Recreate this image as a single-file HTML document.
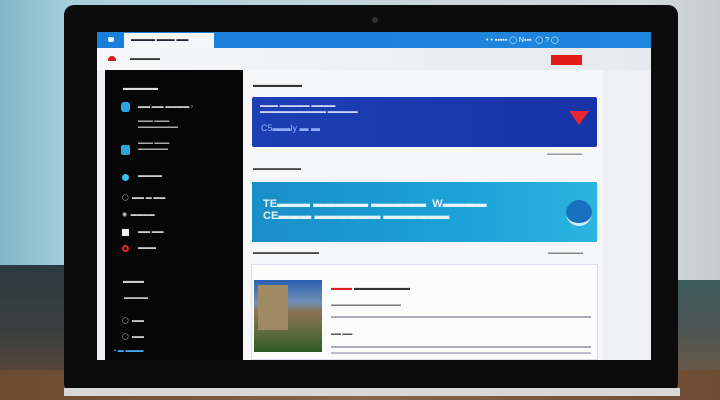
<!DOCTYPE html><html><head><style>
*{margin:0;padding:0;box-sizing:border-box}
body{width:720px;height:400px;overflow:hidden;position:relative;font-family:"Liberation Sans",sans-serif;background:linear-gradient(90deg,#7fb6c8 0%,#a9cfdc 10%,#c9d6db 60%,#d4dadb 90%,#c6cccc 100%)}
.a{position:absolute}
.t{position:absolute;font-size:7px;white-space:nowrap}
</style></head><body>
<div class="a" style="left:0;top:265px;width:80px;height:135px;background:linear-gradient(#2b3a40,#3b3f3e 50%,#6a4a32)"></div>
<div class="a" style="left:660px;top:280px;width:60px;height:120px;background:linear-gradient(#3b5a5c,#4c5654 40%,#7a5a3e)"></div>
<div class="a" style="left:0;top:370px;width:720px;height:30px;background:linear-gradient(90deg,#6b4a30,#8a6446 50%,#6e4c33)"></div>
<div class="a" style="left:64px;top:5px;width:614px;height:388px;background:#0c0c0d;border-radius:10px"></div>
<div class="a" style="left:64px;top:388px;width:616px;height:8px;background:#d8d8d8"></div>
<div class="a" style="left:372px;top:17px;width:6px;height:6px;border-radius:50%;background:#333"></div>
<div class="a" style="left:97px;top:32px;width:554px;height:328px;background:#eef0f3"></div>
<div class="a" style="left:97px;top:32px;width:554px;height:16px;background:linear-gradient(90deg,#1a7fd8,#1f86de)"></div>
<div class="a" style="left:124px;top:33px;width:90px;height:15px;background:#f4f6f8"></div>
<div class="t" style="left:131px;top:37px;color:#223;font-weight:bold;font-size:6px">▬▬▬▬ ▬▬▬ ▬▬</div>
<div class="a" style="left:108px;top:37px;width:6px;height:5px;background:#dff;border-radius:2px"></div>
<div class="t" style="left:486px;top:36px;color:#fff;font-size:7px">• • ▪▪▪▪▪ ◯ N▪▪▪ &nbsp;◯ ? ◯</div>
<div class="a" style="left:97px;top:48px;width:554px;height:22px;background:linear-gradient(90deg,#f6f7f9,#e6e9ed)"></div>
<div class="a" style="left:108px;top:56px;width:8px;height:5px;background:#d02020;border-radius:4px 4px 0 0"></div>
<div class="t" style="left:130px;top:56px;font-size:6px;color:#333">▬▬▬▬▬</div>
<div class="a" style="left:551px;top:55px;width:31px;height:10px;background:#e21a1a"></div>
<div class="a" style="left:105px;top:70px;width:138px;height:290px;background:#060606"></div>
<div class="a" style="left:243px;top:70px;width:360px;height:290px;background:#f6f7f8"></div>
<div class="t" style="left:123px;top:85px;color:#ddd;font-weight:bold">▬▬▬▬▬</div>
<div class="a" style="left:121px;top:145px;width:9px;height:10px;background:#2aa6e0;border-radius:2px"></div>
<div class="a" style="left:121px;top:102px;width:9px;height:10px;background:#2aa6e0;border-radius:3px"></div>
<div class="t" style="left:138px;top:104px;color:#ccc;font-size:6px">▬▬ ▬▬ ▬▬▬▬ ›</div>
<div class="t" style="left:138px;top:118px;color:#aaa;font-size:5px">▬▬▬ ▬▬▬<br>▬▬▬▬▬▬▬▬</div>
<div class="t" style="left:138px;top:140px;color:#aaa;font-size:5px">▬▬▬ ▬▬▬<br>▬▬▬▬▬▬</div>
<div class="a" style="left:122px;top:174px;width:7px;height:7px;border-radius:50%;background:#3ac0f0"></div>
<div class="t" style="left:138px;top:173px;color:#ccc;font-size:6px">▬▬▬▬</div>
<div class="t" style="left:122px;top:194px;color:#ccc;font-size:6px">◯ &nbsp;▬▬ ▬ ▬▬</div>
<div class="t" style="left:122px;top:211px;color:#ccc;font-size:6px">◉ &nbsp;▬▬▬▬</div>
<div class="a" style="left:122px;top:318px;width:0;height:0"></div>
<div class="a" style="left:122px;top:229px;width:7px;height:7px;background:#eee"></div>
<div class="t" style="left:138px;top:229px;color:#ccc;font-size:6px">▬▬ ▬▬</div>
<div class="a" style="left:122px;top:245px;width:7px;height:7px;border-radius:50%;border:2px solid #e22"></div>
<div class="t" style="left:138px;top:245px;color:#ccc;font-size:6px">▬▬▬</div>
<div class="t" style="left:123px;top:278px;color:#ccc;font-size:7px">▬▬▬</div>
<div class="t" style="left:124px;top:295px;color:#bbb;font-size:6px">▬▬▬▬</div>
<div class="t" style="left:122px;top:317px;color:#ccc;font-size:6px">◯ &nbsp;▬▬</div>
<div class="t" style="left:122px;top:333px;color:#ccc;font-size:6px">◯ &nbsp;▬▬</div>
<div class="t" style="left:114px;top:348px;color:#4af;font-size:6px">▪ ▬ ▬▬▬</div>
<div class="t" style="left:252px;top:114px;color:#333"></div>
<div class="t" style="left:253px;top:82px;color:#333;font-size:7px;font-weight:bold">▬▬▬▬▬▬▬</div>
<div class="a" style="left:587px;top:116px;width:5px;height:3px;background:#2255bb;top:116px"></div>
<div class="a" style="left:252px;top:97px;width:345px;height:50px;background:linear-gradient(90deg,#1d3fb4,#1733a8);border-radius:2px"></div>
<div class="t" style="left:260px;top:103px;color:#cfd8ff;font-size:6px">▬▬▬ ▬▬▬▬▬ ▬▬▬▬<br>▬▬▬▬▬▬▬▬▬▬▬ ▬▬▬▬▬</div>
<div class="t" style="left:261px;top:123px;color:#8fb0ff;font-size:9px">C5▬▬ly ▬ ▬</div>
<div class="a" style="left:569px;top:111px;width:0;height:0;border-left:10px solid transparent;border-right:10px solid transparent;border-top:14px solid #e82530"></div>
<div class="t" style="left:547px;top:151px;color:#999;font-size:5px">▬▬▬▬▬▬▬</div>
<div class="t" style="left:253px;top:166px;color:#444;font-size:6px;font-weight:bold">▬▬▬▬▬▬▬▬</div>
<div class="a" style="left:252px;top:182px;width:345px;height:60px;background:linear-gradient(90deg,#1a8ec7,#1ba2d6 60%,#2ab4e0)"></div>
<div class="t" style="left:263px;top:198px;color:#e4f4ff;font-size:11px;font-weight:bold;line-height:12px">TE▬▬▬ ▬▬▬▬▬ ▬▬▬▬▬ &nbsp;W▬▬▬▬<br>CE▬▬▬ ▬▬▬▬▬▬ ▬▬▬▬▬▬</div>
<div class="a" style="left:566px;top:200px;width:26px;height:26px;border-radius:50%;background:#1a70c0;border-bottom:3px solid #cfeefb"></div>
<div class="t" style="left:253px;top:347px"></div>
<div class="t" style="left:253px;top:250px;color:#444;font-size:6px">▬▬▬▬▬▬▬▬▬▬▬</div>
<div class="t" style="left:548px;top:250px;color:#888;font-size:5px">▬▬▬▬▬▬▬</div>
<div class="a" style="left:251px;top:264px;width:347px;height:96px;background:#fbfbfc;border:1px solid #dde"></div>
<div class="a" style="left:254px;top:280px;width:68px;height:72px;background:linear-gradient(180deg,#2a5fb0 0%,#6f8fb8 30%,#8a7452 45%,#5a6a3a 75%,#2e5a20 100%)"></div>
<div class="a" style="left:258px;top:285px;width:30px;height:45px;background:#a08a64"></div>
<div class="t" style="left:331px;top:394px"></div>
<div class="t" style="left:331px;top:394px"></div>
<div class="t" style="left:331px;top:393px"></div>
<div class="t" style="left:331px;top:394px"></div>
<div class="t" style="left:331px;top:394px"></div>
<div class="t" style="left:331px;top:394px"></div>
<div class="t" style="left:331px;top:394px"></div>
<div class="t" style="left:331px;top:394px"></div>
<div class="t" style="left:331px;top:394px"></div>
<div class="t" style="left:331px;top:394px"></div>
<div class="t" style="left:331px;top:394px"></div>
<div class="t" style="left:331px;top:394px"></div>
<div class="t" style="left:331px;top:394px"></div>
<div class="t" style="left:331px;top:394px"></div>
<div class="t" style="left:331px;top:285px;color:#d22;font-size:7px;font-weight:bold">▬▬▬ <span style="color:#333">▬▬▬▬▬▬▬▬</span></div>
<div class="t" style="left:331px;top:302px;color:#777;font-size:5px">▬▬▬▬▬▬▬▬▬▬▬▬▬▬</div>
<div class="a" style="left:331px;top:316px;width:260px;height:2px;background:#aab"></div>
<div class="t" style="left:331px;top:331px;color:#555;font-size:5px">▬▬ ▬▬</div>
<div class="a" style="left:331px;top:346px;width:260px;height:2px;background:#aab"></div>
<div class="a" style="left:331px;top:352px;width:260px;height:2px;background:#bbc"></div>
</body></html>
